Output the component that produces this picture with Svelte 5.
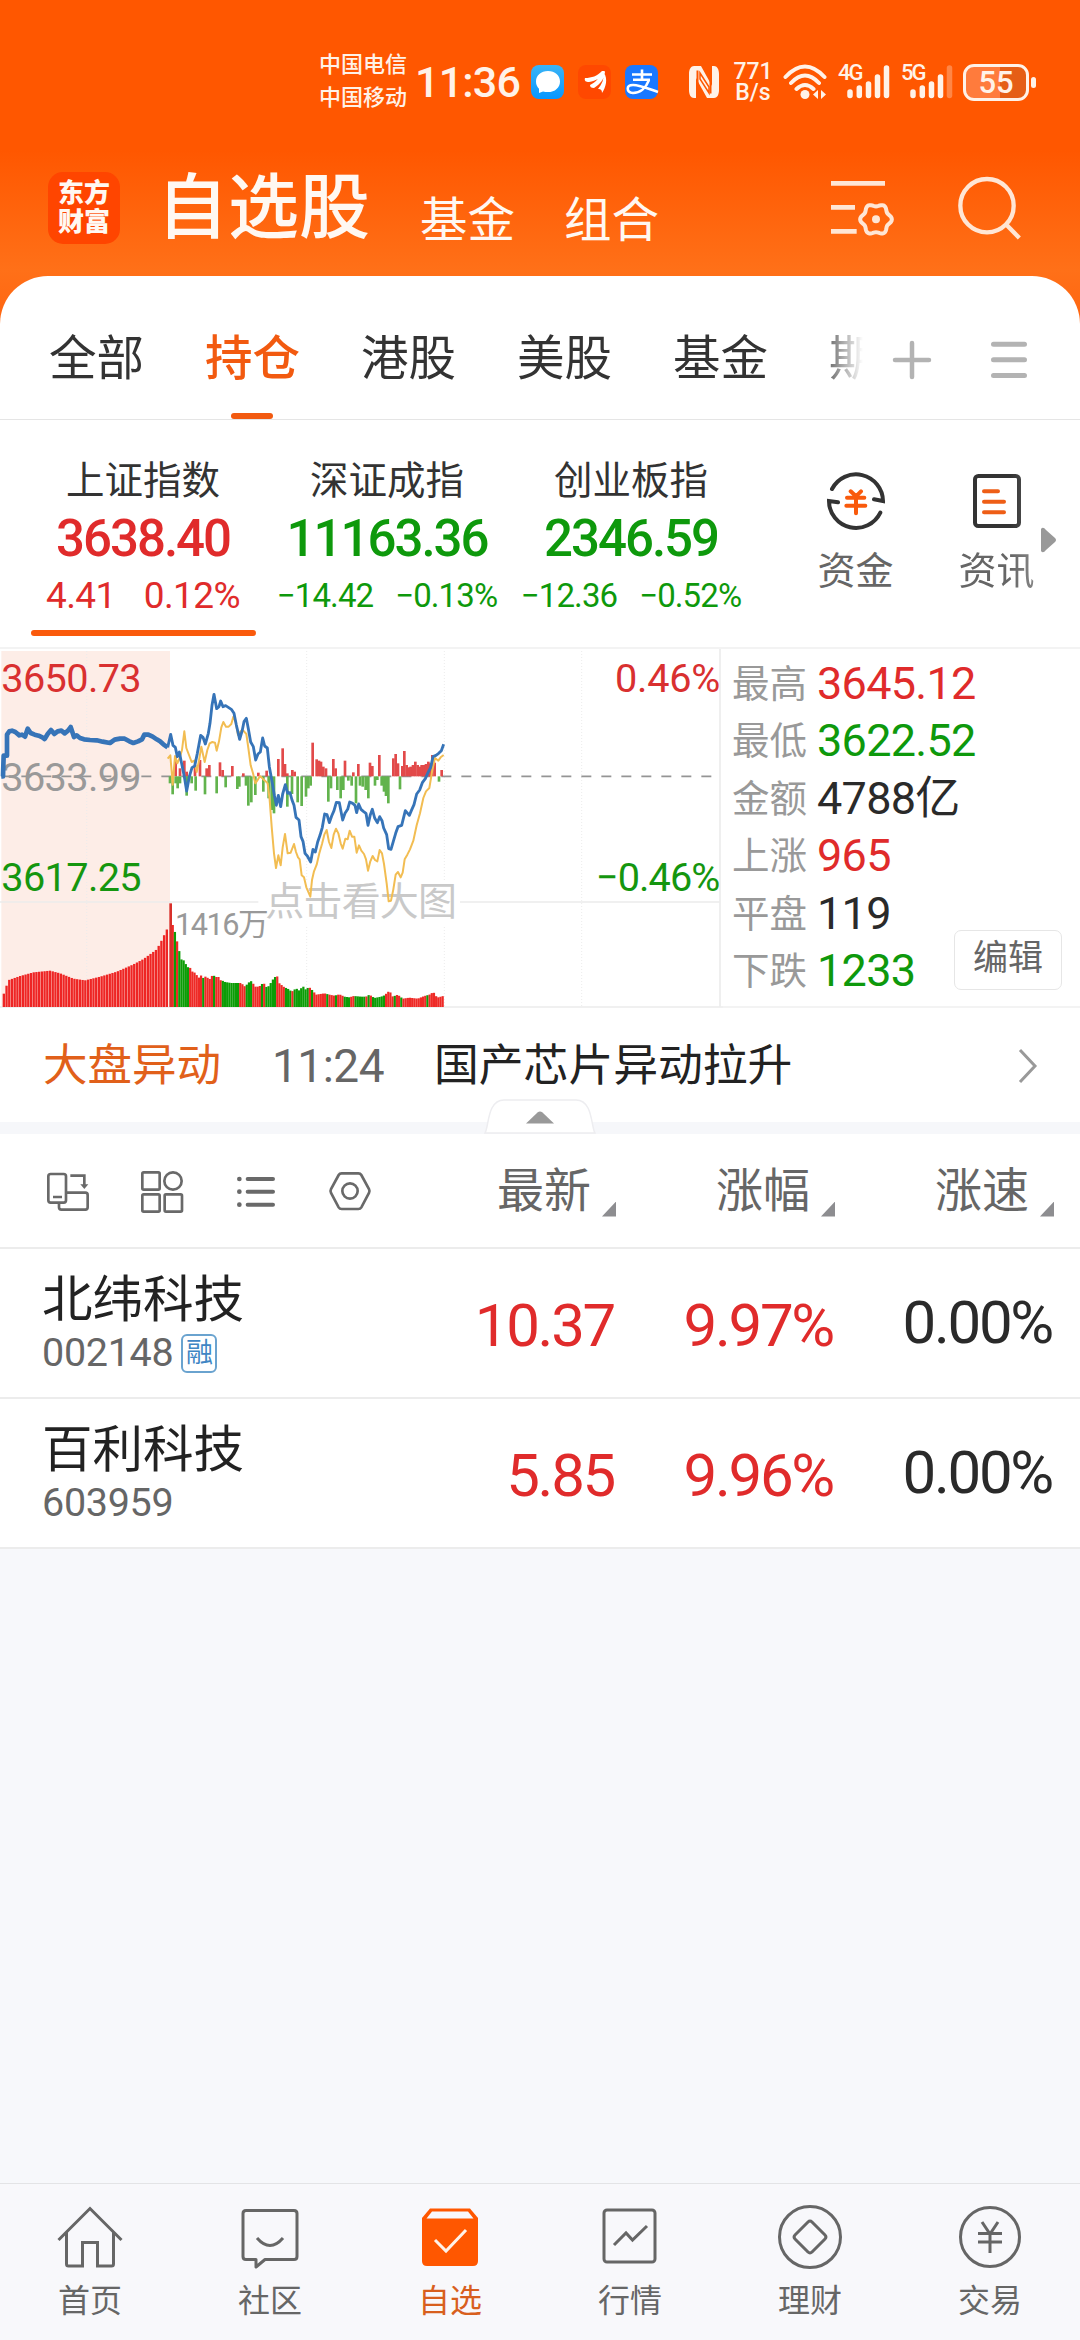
<script lang="ts">
	interface IndexQuote {
		name: string;
		value: string;
		change: string;
		percent: string;
		up: boolean;
	}

	const markets = ['全部', '持仓', '港股', '美股', '基金', '期'];
	let activeMarket = $state('持仓');
	let activeIndex = $state(0);

	const indices: IndexQuote[] = [
		{ name: '上证指数', value: '3638.40', change: '4.41', percent: '0.12%', up: true },
		{ name: '深证成指', value: '11163.36', change: '−14.42', percent: '−0.13%', up: false },
		{ name: '创业板指', value: '2346.59', change: '−12.36', percent: '−0.52%', up: false }
	];

	const stats = [
		{ label: '最高', value: '3645.12', tone: 'up' },
		{ label: '最低', value: '3622.52', tone: 'down' },
		{ label: '金额', value: '4788亿', tone: 'flat' },
		{ label: '上涨', value: '965', tone: 'up' },
		{ label: '平盘', value: '119', tone: 'flat' },
		{ label: '下跌', value: '1233', tone: 'down' }
	];

	const stocks = [
		{ name: '北纬科技', code: '002148', margin: true, price: '10.37', rise: '9.97%', speed: '0.00%' },
		{ name: '百利科技', code: '603959', margin: false, price: '5.85', rise: '9.96%', speed: '0.00%' }
	];

	const columns = ['最新', '涨幅', '涨速'];
	const navItems = ['首页', '社区', '自选', '行情', '理财', '交易'];

	// chart geometry: three units per pixel, zero line at 409, volume floor at 1101
	const ZERO = 409;
	const FLOOR = 1101;

	const auction =
		'4,409 9,409 11,347 21,347 21,284 28,274 36,272 46,276 58,286 66,284 75,290 83,266 92,279 104,284 116,287 127,292 134,297 143,282 153,270 163,282 173,274 184,272 194,280 204,272 212,261 222,291 230,286 240,294 252,298 270,300 290,301 308,305 330,309 344,299 360,296 374,296 388,304 400,309 414,304 426,298 433,284 445,284 458,290 470,298 480,304 490,313 503,322';
	const priceLine =
		'503,322 512,283 519,316 526,322 532,350 538,336 546,376 553,410 560,453 568,410 576,383 584,378 592,340 602,286 609,292 616,312 625,280 630,250 636,196 642,163 650,206 657,200 662,183 669,200 677,197 685,202 694,208 702,220 709,255 719,298 727,270 732,245 739,235 745,266 752,306 760,320 767,360 774,342 781,336 788,294 794,318 802,324 808,380 817,430 823,466 829,496 835,466 842,500 848,462 856,434 863,460 870,458 876,480 882,496 888,532 897,540 903,590 909,604 915,640 922,648 932,666 939,628 946,636 953,606 960,586 967,562 974,522 981,524 988,548 995,528 1002,512 1009,487 1018,488 1028,540 1035,520 1043,508 1049,486 1058,490 1065,496 1070,518 1076,492 1083,508 1090,514 1098,520 1104,556 1111,524 1117,508 1124,534 1132,548 1139,530 1146,542 1151,564 1160,584 1166,626 1173,628 1180,604 1187,580 1194,560 1205,556 1210,536 1216,512 1228,526 1234,512 1242,494 1250,462 1259,450 1267,428 1276,416 1284,398 1292,382 1299,350 1308,346 1316,340 1324,332 1331,313';
	const averageLine =
		'503,356 511,346 518,434 525,348 532,370 539,354 546,330 553,274 559,324 567,345 575,366 583,362 590,396 597,362 604,320 614,366 622,330 629,310 637,306 645,308 650,332 657,304 664,262 670,246 678,260 686,260 694,252 700,230 707,246 714,285 722,274 730,272 739,282 745,324 752,376 759,400 766,430 773,420 780,408 788,416 795,422 803,430 809,480 815,560 822,640 828,684 835,646 842,676 848,622 855,582 863,640 872,638 882,612 888,636 894,652 899,658 905,706 912,712 919,742 931,770 936,720 942,694 950,674 958,640 966,612 973,584 980,570 987,606 994,624 1001,584 1008,566 1015,580 1022,610 1028,626 1036,596 1043,598 1049,572 1056,590 1063,590 1070,638 1077,616 1084,632 1092,642 1098,658 1104,692 1111,664 1118,648 1125,660 1132,664 1139,630 1146,640 1152,672 1160,730 1166,784 1173,782 1180,748 1187,704 1194,696 1202,712 1208,698 1214,658 1222,644 1230,628 1240,602 1250,556 1260,520 1270,474 1278,454 1288,444 1297,390 1305,354 1315,362 1322,352 1331,345';

	const risers = [
		[527, 350], [540, 385], [553, 362], [560, 395], [585, 375], [600, 360], [620, 385], [628, 375],
		[660, 367], [668, 390], [697, 378], [730, 400], [775, 398], [800, 392], [835, 357], [848, 325],
		[855, 372], [862, 400], [877, 390], [884, 395], [938, 308], [950, 358], [957, 362], [963, 365],
		[970, 380], [978, 385], [1000, 357], [1007, 385], [1035, 362], [1060, 397], [1075, 372], [1110, 368],
		[1117, 378], [1138, 345], [1180, 355], [1187, 342], [1194, 370], [1207, 378], [1213, 333], [1220, 375],
		[1226, 382], [1232, 380], [1239, 375], [1246, 365], [1253, 375], [1259, 380], [1265, 375], [1272, 375],
		[1278, 372], [1285, 365], [1291, 370], [1297, 345], [1304, 368], [1325, 390]
	];
	const fallers = [
		[510, 430], [518, 463], [527, 430], [533, 445], [540, 430], [560, 467], [575, 430], [587, 452],
		[615, 463], [650, 460], [677, 442], [712, 447], [718, 440], [738, 437], [745, 497], [754, 487],
		[766, 465], [790, 455], [806, 475], [815, 510], [822, 520], [862, 500], [876, 462], [893, 487],
		[905, 498], [918, 470], [925, 445], [932, 437], [985, 485], [993, 445], [1012, 450], [1022, 475],
		[1030, 450], [1045, 422], [1055, 437], [1068, 490], [1080, 437], [1088, 440], [1097, 450], [1105, 475],
		[1125, 437], [1132, 420], [1145, 437], [1152, 455], [1158, 468], [1165, 490], [1200, 448], [1317, 425]
	];

	const auctionTops = [
		[8, 1070], [18, 1040], [26, 1020], [60, 1008], [100, 997], [150, 992], [180, 1000], [220, 1016],
		[255, 1021], [300, 1010], [350, 995], [400, 973], [430, 957], [470, 928], [485, 900], [505, 858]
	];
	const tradeTops = [
		[515, 855], [519, 865], [526, 895], [533, 926], [540, 958], [547, 960], [554, 972], [561, 982], [568, 984],
		[575, 997], [582, 998], [590, 1010], [596, 1015], [602, 1002], [608, 1018], [616, 1005], [623, 1022],
		[630, 1010], [637, 1004], [643, 1014], [650, 1006], [656, 1020], [664, 1022], [672, 1026], [690, 1029],
		[720, 1029], [732, 1040], [742, 1028], [753, 1022], [760, 1040], [774, 1040], [787, 1028], [798, 1044],
		[806, 1034], [813, 1022], [820, 1012], [828, 1008], [835, 1030], [850, 1042], [860, 1046], [872, 1055],
		[885, 1045], [895, 1052], [905, 1038], [915, 1050], [923, 1040], [935, 1052], [945, 1064], [958, 1062],
		[970, 1060], [985, 1064], [1000, 1067], [1015, 1063], [1030, 1070], [1045, 1072], [1058, 1068],
		[1080, 1070], [1095, 1070], [1105, 1064], [1120, 1074], [1140, 1070], [1150, 1066], [1165, 1052],
		[1175, 1070], [1190, 1064], [1205, 1076], [1225, 1073], [1250, 1076], [1270, 1068], [1285, 1064],
		[1297, 1056], [1308, 1073], [1330, 1067]
	];
	const shades =
		'rgrgggggrrrrrrgrrrrgrrrggggggggrrrgggrrrrgrgggggrrrrgggrgggggggrgrrrrrrgrrrgrrrgggrrgggggrgrggggggrrrrgrrgrrrrrrrrrrrgrrrrrrr';

	function topAt(points: number[][], x: number) {
		for (let i = 1; i < points.length; i++) {
			const [x0, y0] = points[i - 1];
			const [x1, y1] = points[i];
			if (x <= x1) return y0 + ((y1 - y0) * (x - x0)) / (x1 - x0);
		}
		return points[points.length - 1][1];
	}

	const auctionBars = Array.from({ length: 61 }, (_, i) => {
		const x = 8 + i * 8.15;
		return { x, y: topAt(auctionTops, x + 3) };
	});
	const tradeBars = Array.from({ length: 125 }, (_, i) => {
		const x = 515 + i * 6.53;
		return { x, y: topAt(tradeTops, x), up: shades[i % shades.length] === 'r' };
	});

	const gear =
		'M' +
		Array.from({ length: 73 }, (_, i) => {
			const a = (i * Math.PI) / 36;
			const r = 43 + 4.5 * Math.cos(6 * a);
			return `${(198 + r * Math.cos(a)).toFixed(1)},${(180 + r * Math.sin(a)).toFixed(1)}`;
		}).join('L') +
		'Z';
</script>

<div class="app">
	<div class="status">
		<div class="carriers">
			<span>中国电信</span>
			<span>中国移动</span>
		</div>
		<span class="clock">11:36</span>
		<svg class="apps" width="128" height="34" viewBox="0 0 128 34">
			<defs>
				<linearGradient id="chat" x1="0" y1="0" x2="0" y2="1">
					<stop offset="0" stop-color="#3bb4f5" />
					<stop offset="1" stop-color="#0797ff" />
				</linearGradient>
			</defs>
			<rect width="33" height="34" rx="8" fill="url(#chat)" />
			<path d="M17 6c-7 0-12 4.500-12 10.500 0 3 1.200 5.500 3 7.300V28l4-1.600c1.500.5 3.200.7 5 .7 7 0 12-4.400 12-10.600S24 6 17 6z" fill="#fff" />
			<rect x="47" width="33" height="34" rx="8" fill="#ff4800" />
			<path d="M54 13c7 0 12-2 17-7h3c-3 6-9 10-16 11-3 0-5-1-4-4zM59 20c6-3 10-8 12-13l3 0c-1 8-5 12-11 16-3 0-4-1-4-3zM67 24c4-5 6-10 6-16 4 6 2 14-2 20 0-3-1-4-4-4z" fill="#fff" />
			<rect x="94" width="33" height="34" rx="8" fill="#1a78ff" />
			<g fill="none" stroke="#fff" stroke-width="2.600">
				<path d="M101 9.500h20M111 4.500v10M102 14.800h17M118 15c-3 8-9 13-16 13-7-1-7-8 0-8 7 0 16 4 25 7" />
			</g>
		</svg>
		<svg class="nfc" width="32" height="34" viewBox="0 0 32 34">
			<path d="M6 1h7l11 20V1h2c3 0 5 3 5 8v16c0 5-2 8-5 8h-7L8 13v20H6c-3 0-5-3-5-8V9c0-5 2-8 5-8z" fill="#fff2e8" />
			<path d="M9.500 5.500v26M22.500 2.500v26" stroke="#ff5700" stroke-width="2" fill="none" />
			<path d="M12 8l9 14v6L12 14z" fill="#fff2e8" stroke="#ff5700" stroke-width="1.500" />
		</svg>
		<div class="speed">
			<span>771</span>
			<span>B/s</span>
		</div>
		<svg class="wifi" width="44" height="36" viewBox="0 0 44 36" fill="none" stroke="#fff2e8" stroke-linecap="round">
			<path d="M2.500 13Q22-8 41.500 13M8 19Q22 4 36 19M13.500 25Q22 17 30.500 25" stroke-width="4" />
			<circle cx="22" cy="30.500" r="4.500" fill="#fff2e8" stroke="none" />
			<path d="M35 26v9l-5-4.500zM38 26v9l5-4.500z" fill="#fff2e8" stroke="none" />
		</svg>
		<div class="signal">
			<span>4G</span>
			<svg width="44" height="36" viewBox="0 0 44 36" stroke="#fff2e8" stroke-width="5.500" stroke-linecap="round">
				<path d="M4 28v3.500M13.300 24v7.500M22.500 20v11.500M31.500 13v18.500M40.500 4v27.500" />
			</svg>
		</div>
		<div class="signal">
			<span>5G</span>
			<svg width="44" height="36" viewBox="0 0 44 36" stroke="#fff2e8" stroke-width="5.500" stroke-linecap="round">
				<path d="M4 28v3.500M13.300 24v7.500M22.500 20v11.500M31.500 13v18.500" />
				<path d="M40.500 4v27.500" opacity=".3" />
			</svg>
		</div>
		<div class="battery"><span>55</span></div>
		<i class="nub"></i>
	</div>

	<header class="header">
		<div class="logo"><span>东方</span><span>财富</span></div>
		<h1>自选股</h1>
		<span class="sub">基金</span>
		<span class="sub">组合</span>
		<svg class="settings" width="68" height="60" viewBox="54 56 204 180" fill="none" stroke="#ffe6d5" stroke-width="14">
			<path d="M63 72h162M63 144h72M63 216h77" />
			<path d={gear} stroke-width="12" />
			<circle cx="198" cy="180" r="12" fill="#ffe6d5" stroke="none" />
		</svg>
		<svg class="search" width="68" height="68" viewBox="438 40 204 204" fill="none" stroke="#ffe6d5" stroke-width="13">
			<circle cx="531" cy="135" r="80" />
			<path d="M587 190l41 42" />
		</svg>
	</header>

	<main class="sheet">
		<nav class="markets">
			<div class="market-list">
				{#each markets as market}
					<button class="market" class:active={market === activeMarket} onclick={() => (activeMarket = market)}>{market}</button>
				{/each}
			</div>
			<svg class="plus" width="42" height="42" viewBox="0 0 42 42" stroke="#b3b3b3" stroke-width="4.500" stroke-linecap="round">
				<path d="M4 21h34M21 4v34" />
			</svg>
			<svg class="menu" width="38" height="42" viewBox="0 0 38 42" stroke="#b3b3b3" stroke-width="5" stroke-linecap="round">
				<path d="M3.500 5.200h31M3.500 20.800h31M3.500 36.400h31" />
			</svg>
		</nav>

		<section class="indices">
			{#each indices as item, i}
				<button class="index" onclick={() => (activeIndex = i)}>
					<span class="index-name">{item.name}</span>
					<span class="index-value {item.up ? 'up' : 'down'}">{item.value}</span>
					<span class="index-change {item.up ? 'up large' : 'down'}">
						<span>{item.change}</span>
						<span>{item.percent}</span>
					</span>
					{#if i === activeIndex}<i class="index-bar"></i>{/if}
				</button>
			{/each}
			<div class="shortcuts">
				<div class="shortcut">
					<svg width="62" height="62" viewBox="45 930 186 186" fill="none" stroke="#333" stroke-width="12" stroke-linecap="round">
						<path d="M66 987A81 81 0 0 1 219 1023L192 1018M211 1058A81 81 0 0 1 57 1023L84 1027" />
						<path d="M122 994l16 15 15-15M111 1013h52M109 1037h57M138 1010v50" stroke="#f95a0c" />
					</svg>
					<span>资金</span>
				</div>
				<div class="shortcut faded">
					<svg width="62" height="62" viewBox="468 930 186 186" fill="none" stroke="#333" stroke-width="12" stroke-linecap="round">
						<rect x="495" y="948" width="132" height="150" rx="10" />
						<path d="M522 994h42M522 1025h60M522 1057h60" stroke="#ee5e16" />
					</svg>
					<span>资讯</span>
				</div>
				<svg class="more" width="17" height="26" viewBox="0 0 17 26" fill="#999">
					<path d="M1 2Q3-1 6 3L15 11Q17 13 15 15L6 23Q3 27 1 24z" />
				</svg>
			</div>
		</section>

		<section class="board">
			<svg class="chart" width="723" height="360" viewBox="0 24 2169 1080">
				<rect x="4" y="33" width="506" height="1068" fill="#fdede7" />
				<g stroke="#ececec" stroke-width="3">
					<path d="M260 33V1101M920 33V1101M1333 33V1101M1745 33V1101" stroke-dasharray="3 6" />
					<path d="M0 786H2160M0 1101H2169" stroke-width="5" />
					<path d="M2160 27V1101" stroke-width="5" />
				</g>
				<rect x="775" y="720" width="605" height="136" fill="#fff" />
				<path d="M4 409H2135" stroke="#959595" stroke-width="5" stroke-dasharray="30 30" />
				{#each risers as [x, y]}
					<rect x={x - 4} {y} width="8" height={ZERO - y} fill="#e24a4a" />
				{/each}
				{#each fallers as [x, y]}
					<rect x={x - 4} y={ZERO} width="8" height={y - ZERO} fill="#62b34d" />
				{/each}
				{#each auctionBars as bar}
					<rect x={bar.x} y={bar.y} width="7" height={FLOOR - bar.y} fill="#ee2524" />
				{/each}
				{#each tradeBars as bar}
					<rect x={bar.x} y={bar.y} width="6.600" height={FLOOR - bar.y} fill={bar.up ? '#ee2a26' : '#0c9c06'} />
				{/each}
				<rect x="508" y="790" width="8" height="311" fill="#d8302a" />
				<text x="525" y="885" font-size="92" fill="#999" textLength="281">1416万</text>
				<text x="796" y="826" font-size="117" fill="#c9c9c9" textLength="575">点击看大图</text>
				<g font-size="119">
					<text x="4" y="156" fill="#d93030" textLength="421">3650.73</text>
					<text x="4" y="452" fill="#999" textLength="421">3633.99</text>
					<text x="4" y="752" fill="#15960f" textLength="421">3617.25</text>
					<text x="1845" y="156" fill="#d93030" textLength="316">0.46%</text>
					<text x="1788" y="752" fill="#15960f" textLength="373">−0.46%</text>
				</g>
				<g fill="none" stroke-linejoin="round">
					<polyline points={averageLine} stroke="#f2bd52" stroke-width="6" />
					<polyline points={priceLine} stroke="#3674b8" stroke-width="8.500" />
					<polyline points={auction} stroke="#3674b8" stroke-width="14" />
				</g>
			</svg>
			<div class="stats">
				{#each stats as stat}
					<div class="stat">
						<span class="stat-label">{stat.label}</span>
						<span class="stat-value {stat.tone}">{stat.value}</span>
					</div>
				{/each}
				<button class="edit">编辑</button>
			</div>
		</section>

		<section class="news">
			<span class="news-tag">大盘异动</span>
			<span class="news-time">11:24</span>
			<span class="news-title">国产芯片异动拉升</span>
			<svg width="20" height="36" viewBox="0 0 20 36" fill="none" stroke="#999" stroke-width="3">
				<path d="M2 2l15 16L2 34" />
			</svg>
		</section>

		<div class="divider">
			<svg class="collapse" width="112" height="36" viewBox="0 0 112 36">
				<path d="M1 34C5 28 3 1 20 1h72c17 0 15 27 19 33z" fill="#fff" stroke="#ededf0" stroke-width="1.500" />
				<path d="M42 24.500L53.500 13.500Q56 11.500 58.500 13.500L70 24.500z" fill="#999" />
			</svg>
		</div>

		<section class="table">
			<div class="table-head">
				<svg class="tools" width="300" height="50" viewBox="45 45 900 150" fill="none" stroke="#696969" stroke-width="8">
					<rect x="55" y="69" width="53" height="86" rx="7" />
					<path d="M69 138h27M108 125h58q7 0 7 7v37q0 7-7 7H94q-7 0-7-7v-14M121 74h42v28" />
					<path d="M151 100h24l-12 14z" fill="#696969" stroke="none" />
					<rect x="337" y="64" width="52" height="52" rx="4" />
					<circle cx="429" cy="90" r="26" />
					<rect x="337" y="130" width="52" height="52" rx="4" />
					<rect x="404" y="130" width="52" height="52" rx="4" />
					<path d="M628 84h.1M628 122h.1M628 161h.1" stroke-width="14" stroke-linecap="round" />
					<path d="M653 84h76M653 122h76M653 161h76" stroke-width="12" stroke-linecap="round" />
				</svg>
				<svg class="hex" width="44" height="44" viewBox="894 56 132 132" fill="none" stroke="#696969" stroke-width="8">
					<path d="M935 69h50q6 0 9 5l23 42q3 6 0 12l-23 43q-3 5-9 5h-50q-6 0-9-5l-23-43q-3-6 0-12l23-42q3-5 9-5z" />
					<circle cx="960" cy="122" r="23" />
				</svg>
				{#each columns as column}
					<div class="column"><span>{column}</span><i class="sort"></i></div>
				{/each}
			</div>
			{#each stocks as stock}
				<div class="row">
					<div class="stock">
						<span class="stock-name">{stock.name}</span>
						<span class="stock-code">{stock.code}{#if stock.margin}<em>融</em>{/if}</span>
					</div>
					<span class="cell price up">{stock.price}</span>
					<span class="cell up">{stock.rise}</span>
					<span class="cell flat">{stock.speed}</span>
				</div>
			{/each}
		</section>
	</main>

	<nav class="bottom">
		{#each navItems as item, i}
			<div class="nav-item" class:current={item === '自选'}>
				<svg width="70" height="70" viewBox="0 0 70 70" fill="none" stroke="#666" stroke-width="3">
					{#if i === 0}
						<path d="M3.500 36L35 4.500 66.500 36M11.500 28.500V60q0 2 2 2h14V38.500h15V62h14q2 0 2-2V28.500" />
					{:else if i === 1}
						<path d="M11 6.500h48q3 0 3 3v43q0 3-3 3H30l-9 7.500v-7.500H11q-3 0-3-3v-43q0-3 3-3z" stroke-linejoin="round" />
						<path d="M22 34q13 15 26 0" />
					{:else if i === 2}
						<path d="M7 14L15 4.500h40L63 14v43q0 5-5 5H12q-5 0-5-5z" fill="#ff5700" stroke="none" />
						<path d="M11.500 14.500L17 7.500h36l5.500 7z" fill="#f8f8fb" stroke="none" />
						<path d="M20 36l11 11 20-21" stroke="#fff2e8" />
					{:else if i === 3}
						<rect x="9" y="6" width="51" height="52" rx="3" />
						<path d="M19 41l12-12 6.500 7L52 22" />
					{:else if i === 4}
						<circle cx="35" cy="33" r="30.500" />
						<path d="M33 18q2-2 4 0l13 13q2 2 0 4L37 48q-2 2-4 0L20 35q-2-2 0-4z" />
					{:else}
						<circle cx="35" cy="33" r="29.500" />
						<path d="M27 18l8 12 8-12M23 29.500h24M23 38h24M35 30v19" />
					{/if}
				</svg>
				<span>{item}</span>
			</div>
		{/each}
	</nav>
</div>

<style>
	:global(body) {
		background: #f7f8fb;
	}

	.app {
		display: flex;
		flex-direction: column;
		width: 1080px;
		height: 2340px;
		overflow: hidden;
		background: #f7f8fb linear-gradient(#ff5700 0, #ff5700 150px, #ff7018 270px, #ff6410 330px) no-repeat 0 0 / 100% 330px;
		font-family: Roboto, 'Noto Sans CJK SC', sans-serif;
		color: #333;
	}

	button {
		padding: 0;
		border: 0;
		background: none;
		font: inherit;
		color: inherit;
	}

	svg {
		display: block;
		flex: none;
	}

	.up {
		color: #e02b2b;
	}

	.down {
		color: #0e990c;
	}

	.flat {
		color: #2a2a2a;
	}

	.status {
		display: flex;
		align-items: center;
		height: 164px;
		box-sizing: border-box;
		padding-left: 319px;
		color: #fff2e8;
		white-space: nowrap;
	}

	.carriers {
		display: flex;
		flex-direction: column;
		width: 96px;
		padding-bottom: 3px;
		font-size: 22px;
		font-weight: 500;
		line-height: 33px;
	}

	.clock {
		width: 116px;
		font-size: 43px;
		font-weight: 500;
		letter-spacing: -0.8px;
	}

	.nfc {
		margin-left: 29px;
	}

	.speed {
		display: flex;
		flex-direction: column;
		width: 48px;
		margin-left: 9px;
		text-align: center;
		font-size: 23px;
		font-weight: 500;
		line-height: 21px;
	}

	.wifi {
		margin-left: 6px;
	}

	.signal {
		position: relative;
		width: 44px;
		margin-left: 19px;
	}

	.signal span {
		position: absolute;
		top: -1px;
		left: -8px;
		font-size: 22px;
		font-weight: 500;
		line-height: 20px;
		letter-spacing: -2px;
	}

	.battery {
		width: 60px;
		height: 31px;
		margin-left: 10px;
		border: 3px solid #fff2e8;
		border-radius: 11px;
		background: linear-gradient(90deg, #ff7b3c 57%, #e55e16 57%);
		text-align: center;
		font-size: 31px;
		font-weight: 500;
		line-height: 32px;
	}

	.nub {
		width: 5px;
		height: 11px;
		margin-left: 2px;
		border-radius: 3px;
		background: #fff2e8;
	}

	.header {
		display: flex;
		align-items: center;
		height: 88px;
		margin-bottom: 24px;
		padding-left: 48px;
		color: #fff8f2;
	}

	.logo {
		display: flex;
		flex-direction: column;
		align-items: center;
		justify-content: center;
		width: 72px;
		height: 72px;
		border-radius: 15px;
		background: #ff4500;
		font-size: 26px;
		font-weight: 900;
		line-height: 29px;
	}

	h1 {
		width: 213px;
		margin: 0 50px 0 37px;
		font-size: 71px;
		font-weight: 500;
		line-height: 88px;
		white-space: nowrap;
	}

	.sub {
		width: 95px;
		margin: 25px 49px 0 0;
		font-size: 47.5px;
		line-height: 60px;
	}

	.settings {
		margin-left: 120px;
	}

	.search {
		margin-left: 60px;
	}

	.sheet {
		border-radius: 48px 48px 0 0;
		background: #fff;
	}

	.markets {
		display: flex;
		align-items: center;
		height: 144px;
		box-sizing: border-box;
		border-bottom: 1px solid #e5e5e5;
	}

	.market-list {
		display: flex;
		gap: 61px;
		width: 880px;
		height: 143px;
		box-sizing: border-box;
		padding-left: 49px;
		mask-image: linear-gradient(90deg, #000 815px, transparent 863px);
	}

	.market {
		position: relative;
		flex: none;
		height: 143px;
		padding-top: 24px;
		font-size: 47.5px;
		line-height: 119px;
	}

	.market.active {
		color: #f25a10;
		font-weight: 500;
	}

	.market.active::after {
		content: '';
		position: absolute;
		bottom: 0;
		left: 26px;
		width: 42px;
		height: 6px;
		border-radius: 3px;
		background: #f25a10;
	}

	.plus {
		margin: 24px 57px 0 11px;
	}

	.menu {
		margin-top: 24px;
	}

	.indices {
		display: flex;
		height: 229px;
		box-sizing: border-box;
		padding-left: 21px;
		border-bottom: 2px solid #f3f3f3;
		white-space: nowrap;
	}

	.index {
		display: flex;
		flex: none;
		flex-direction: column;
		align-items: center;
		width: 244px;
		padding-top: 36px;
	}

	.index-name {
		font-size: 38.5px;
		line-height: 50px;
	}

	.index-value {
		margin-top: 3px;
		font-size: 51px;
		font-weight: 500;
		line-height: 60px;
		letter-spacing: -2px;
	}

	.index-change {
		display: flex;
		gap: 22px;
		margin-top: 7px;
		font-size: 33px;
		line-height: 40px;
		letter-spacing: -0.9px;
	}

	.index-change.large {
		gap: 28px;
		font-size: 37px;
		letter-spacing: -0.6px;
	}

	.index-bar {
		width: 225px;
		height: 6px;
		margin-top: 14px;
		border-radius: 3px;
		background: #fa5a0c;
	}

	.shortcuts {
		position: relative;
		display: flex;
		width: 327px;
		box-sizing: border-box;
		padding-left: 32px;
	}

	.shortcut {
		display: flex;
		flex: none;
		flex-direction: column;
		align-items: center;
		width: 141px;
		padding-top: 50px;
		font-size: 38px;
		line-height: 50px;
		color: #666;
	}

	.shortcut span {
		margin-top: 14px;
	}

	.faded {
		mask-image: linear-gradient(90deg, #000 60%, rgba(0, 0, 0, 0.5));
	}

	.more {
		position: absolute;
		top: 107px;
		right: 23px;
	}

	.board {
		display: flex;
		height: 359px;
	}

	.chart {
		margin-top: -1px;
	}

	.stats {
		position: relative;
		flex: 1;
		padding: 6px 0 0 9px;
		border-bottom: 2px solid #f3f3f3;
	}

	.stat {
		display: flex;
		gap: 10px;
		height: 57.4px;
		line-height: 58px;
	}

	.stat-label {
		font-size: 37.5px;
		color: #999;
	}

	.stat-value {
		font-size: 45px;
		letter-spacing: -0.7px;
	}

	.edit {
		position: absolute;
		top: 281px;
		right: 18px;
		width: 108px;
		height: 60px;
		padding-bottom: 2px;
		border: 1px solid #e6e6e6;
		border-radius: 7px;
		background: #fff;
		font-size: 35px;
		line-height: 56px;
		color: #666;
	}

	.news {
		display: flex;
		align-items: center;
		height: 114px;
		box-sizing: border-box;
		padding: 1px 42px 0 43px;
		line-height: 60px;
	}

	.news-tag {
		width: 229px;
		font-size: 44.5px;
		color: #e1601a;
	}

	.news-time {
		width: 162px;
		font-size: 46px;
		letter-spacing: -0.5px;
		color: #666;
	}

	.news-title {
		flex: 1;
		font-size: 44.8px;
		color: #222;
	}

	.divider {
		position: relative;
		height: 12px;
		background: #f6f7fa;
	}

	.collapse {
		position: absolute;
		top: -23px;
		left: 484px;
	}

	.table {
		background: #fff;
	}

	.table-head {
		display: flex;
		align-items: center;
		height: 115px;
		box-sizing: border-box;
		padding-left: 45px;
		border-bottom: 2px solid #ececec;
	}

	.tools {
		margin-right: -17px;
	}

	.hex {
		margin-right: 25px;
	}

	.column {
		display: flex;
		justify-content: flex-end;
		width: 219px;
		font-size: 47px;
		line-height: 60px;
		color: #666;
	}

	.sort {
		width: 14px;
		height: 15px;
		margin: 41px 0 0 11px;
		background: #8d8d90;
		clip-path: polygon(100% 0, 100% 100%, 0 100%);
	}

	.row {
		display: flex;
		height: 150px;
		box-sizing: border-box;
		padding-left: 42px;
		border-bottom: 2px solid #ececec;
	}

	.stock {
		display: flex;
		flex-direction: column;
		width: 353px;
		padding-top: 23px;
	}

	.stock-name {
		font-size: 50.5px;
		line-height: 56px;
		color: #222;
	}

	.stock-code {
		display: flex;
		align-items: center;
		margin-top: 5px;
		font-size: 39.5px;
		line-height: 40px;
		letter-spacing: -0.3px;
		color: #666;
	}

	em {
		width: 32px;
		height: 35px;
		margin-left: 8px;
		border: 2px solid #6aa3cf;
		border-radius: 6px;
		font-size: 27px;
		font-style: normal;
		line-height: 34px;
		text-align: center;
		color: #3f86c4;
	}

	.cell {
		width: 219px;
		font-size: 60px;
		line-height: 153px;
		letter-spacing: -2.3px;
		text-align: right;
	}

	.cell.flat {
		line-height: 148px;
	}

	.bottom {
		display: flex;
		height: 157px;
		box-sizing: border-box;
		margin-top: auto;
		border-top: 1px solid #e3e4e6;
		background: #f8f8fb;
	}

	.nav-item {
		display: flex;
		flex-direction: column;
		align-items: center;
		width: 180px;
		padding-top: 20px;
		font-size: 32px;
		line-height: 40px;
		color: #666;
	}

	.nav-item span {
		margin-top: 7px;
	}

	.current {
		color: #d85f1e;
	}
</style>
